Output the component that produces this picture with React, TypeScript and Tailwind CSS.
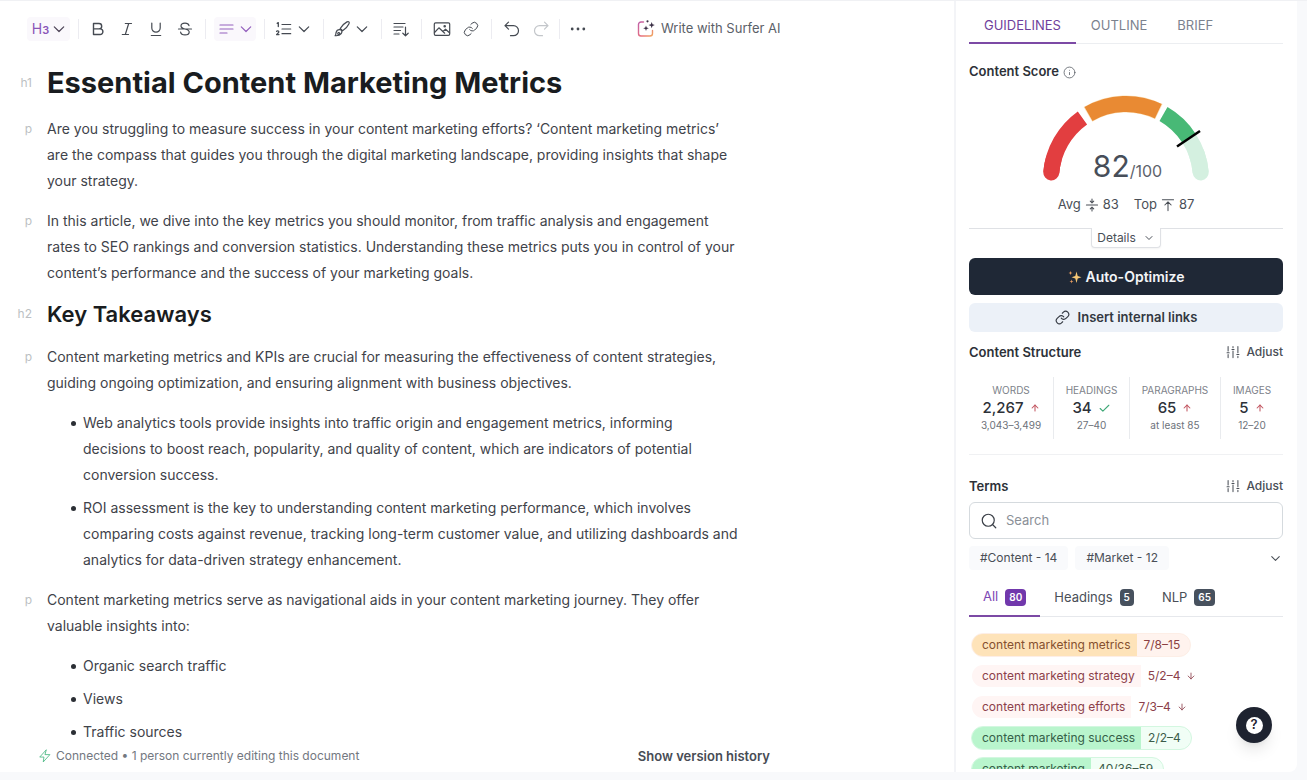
import type { ReactNode } from "react";
import { Link, Search, ChevronDown, Check, ArrowUp, ArrowDown, Info } from "lucide-react";

function Icon({ children, size = 20, w = 1.2, className = "" }: { children: ReactNode; size?: number; w?: number; className?: string }) {
  return (
    <svg
      width={size}
      height={size}
      viewBox="0 0 20 20"
      fill="none"
      stroke="currentColor"
      strokeWidth={w}
      strokeLinecap="round"
      strokeLinejoin="round"
      className={`shrink-0 ${className}`}
      aria-hidden="true"
    >
      {children}
    </svg>
  );
}

function Tool({ label, children, className = "text-[#454a52]" }: { label: string; children: ReactNode; className?: string }) {
  return (
    <button type="button" aria-label={label} className={`flex h-6 w-5 items-center justify-center ${className}`}>
      {children}
    </button>
  );
}

function DropTool({ label, children, className = "text-[#454a52]" }: { label: string; children: ReactNode; className?: string }) {
  return (
    <button type="button" aria-label={label} className={`flex h-6 items-center rounded ${className}`}>
      {children}
      <Icon>
        <path d="m5.300 7.800 4.700 4.700 4.700-4.700" />
      </Icon>
    </button>
  );
}

const Sep = ({ className = "mx-2" }: { className?: string }) => <span className={`h-5 w-px bg-[#ececf1] ${className}`} />;

function Toolbar() {
  return (
    <div role="toolbar" aria-label="Formatting" className="flex h-14 shrink-0 items-center pl-[27px]">
      <DropTool label="Heading 3" className="w-[43px] justify-center bg-[#faf8fc] pl-1 text-[#4c4356]">
        <span className="flex items-baseline text-sm leading-none text-[#8a55b8]">
          H<span className="text-[11px] font-semibold">3</span>
        </span>
      </DropTool>
      <Sep className="mr-[9px] ml-2" />
      <div className="flex gap-[9px]">
        <Tool label="Bold">
          <Icon w={1.4}>
            <path d="M5.500 4.500H11a2.700 2.700 0 0 1 0 5.400H5.500zM5.500 9.900h6.600a2.800 2.800 0 0 1 0 5.600H5.500z" />
          </Icon>
        </Tool>
        <Tool label="Italic">
          <Icon>
            <path d="M8.300 4.500h6.200M5.300 15.500h6.200M11.700 4.500l-3.400 11" />
          </Icon>
        </Tool>
        <Tool label="Underline">
          <Icon>
            <path d="M5.800 4v5a4.200 4.200 0 0 0 8.400 0V4M5.300 16.500h9.400" />
          </Icon>
        </Tool>
        <Tool label="Strikethrough">
          <Icon>
            <path d="M14 6.600c-.4-1.500-1.900-2.400-4-2.400-2.400 0-4 1.100-4 2.900 0 1.600 1.200 2.300 4 2.900 2.900.6 4.200 1.300 4.200 3 0 1.800-1.700 2.900-4.200 2.900-2.400 0-4.100-1-4.400-2.800M3.500 10h13" />
          </Icon>
        </Tool>
      </div>
      <Sep className="mr-2 ml-[10px]" />
      <DropTool label="Align left" className="bg-[#faf8fc] pl-[2px] text-[#9460bd]">
        <Icon>
          <path d="M4 6h13M4 10h13M4 14h7" />
        </Icon>
      </DropTool>
      <Sep className="mr-[9px] ml-2" />
      <DropTool label="Numbered list">
        <Icon>
          <path d="M8 5.500h8.700M8 10h8.700M8 14.700h8.700" />
          <path d="m3.200 4.400 1.100-.8v4M2.600 12.400c.5-.9 2.400-.6 2.200.6 0 .8-1.500 1.600-2.200 2.600h2.400" strokeWidth="1.300" />
        </Icon>
      </DropTool>
      <Sep className="mr-2 ml-[9px]" />
      <DropTool label="Brush">
        <Icon>
          <path d="M8.200 9.500c1.500-2.400 4.700-5.500 6.800-6.600 1.700-.8 2.700.3 2 1.900-1 2.200-4 5.500-6.400 7z" />
          <path d="M8 10.700c1.800.3 2.500 2.300 1.200 3.900-1.300 1.800-3.800 2.300-6.100 2.100 1-.8.6-1.900 1-3.200.5-1.700 2.200-3 3.900-2.800zM6.700 13.600a1 1 0 1 0 .1 0" />
        </Icon>
      </DropTool>
      <Sep className="mx-[9px]" />
      <Tool label="Insert below">
        <Icon>
          <path d="M3 4.500h11M3 8h9M3 11.500h6.500M3 15h5M14.500 8v8.500M11.800 14.200l2.700 2.600 2.700-2.600" />
        </Icon>
      </Tool>
      <Sep className="mx-[10px]" />
      <div className="flex gap-[9px]">
        <Tool label="Image">
          <Icon>
            <rect x="2.300" y="3.800" width="15.400" height="12.600" rx="1.300" />
            <path d="m2.500 13.500 4.400-4.700 5.800 5.400M11 12.500l2.500-2.300 4 3.600" />
            <circle cx="12.700" cy="7.200" r=".7" />
          </Icon>
        </Tool>
        <Tool label="Link">
          <Link size={16} strokeWidth={1.5} />
        </Tool>
      </div>
      <Sep className="mr-[10px] ml-[10px]" />
      <div className="flex gap-[9px]">
        <Tool label="Undo">
          <Icon>
            <path d="M6.500 3.200 3 6.700l3.500 3.500M3 6.700h8.500a5 5 0 0 1 0 10H8.500" />
          </Icon>
        </Tool>
        <Tool label="Redo" className="text-[#c3c6ca]">
          <Icon>
            <path d="M13.500 3.200 17 6.700l-3.500 3.500M17 6.700H8.500a5 5 0 0 0 0 10h3" />
          </Icon>
        </Tool>
      </div>
      <Sep className="mx-2" />
      <Tool label="More">
        <Icon>
          <g fill="currentColor" stroke="none">
            <circle cx="4.200" cy="10" r="1.400" />
            <circle cx="10" cy="10" r="1.400" />
            <circle cx="15.800" cy="10" r="1.400" />
          </g>
        </Icon>
      </Tool>
      <button type="button" className="ml-12 flex items-center gap-[5px] text-[13px] text-[#5b6068]">
        <svg width="20" height="20" viewBox="0 0 20 20" fill="none" aria-hidden="true">
          <defs>
            <linearGradient id="ai" x1="0" y1="0" x2="1" y2="1">
              <stop offset="0" stopColor="#c05fa8" />
              <stop offset=".6" stopColor="#e8707e" />
              <stop offset="1" stopColor="#f0a860" />
            </linearGradient>
          </defs>
          <path d="M7.500 3H5a2.500 2.500 0 0 0-2.500 2.500v9A2.500 2.500 0 0 0 5 17h9a2.500 2.500 0 0 0 2.500-2.500V11.500" stroke="url(#ai)" strokeWidth="1.400" strokeLinecap="round" />
          <g fill="#3a2f45">
            <path d="m10 6.500.7 2.100 2.100.7-2.100.7-.7 2.100-.7-2.100-2.100-.7 2.100-.7z" />
            <path d="m15.700 3 .8 2.300 2.300.8-2.300.8-.8 2.300-.8-2.300-2.300-.8 2.300-.8z" />
            <circle cx="11.500" cy="2.300" r="1.100" />
          </g>
        </svg>
        Write with Surfer AI
      </button>
    </div>
  );
}

function Block({ tag, children, className = "" }: { tag: string; children: ReactNode; className?: string }) {
  return (
    <div className={`flex ${className}`}>
      <span className="w-8 shrink-0 text-right text-[12px]/[inherit] text-[#bcbfc3]">{tag}</span>
      <div className="ml-[15px] min-w-0 flex-1">{children}</div>
    </div>
  );
}

function Bullets({ items, className = "" }: { items: string[]; className?: string }) {
  return (
    <ul className={`ml-[71px] flex flex-col gap-[7px] ${className}`}>
      {items.map((t) => (
        <li key={t} className="flex">
          <span className="mt-[11px] mr-[7px] size-[5px] shrink-0 rounded-full bg-[#2b2f35]" />
          <span>{t}</span>
        </li>
      ))}
    </ul>
  );
}

function Editor() {
  return (
    <article className="min-h-0 max-w-[742px] flex-1 overflow-hidden text-[14px] leading-[26px] text-[#3f434a]">
      <Block tag="h1" className="mt-1 leading-[44px]">
        <h1 className="text-[29px] font-bold text-[#191c20]">Essential Content Marketing Metrics</h1>
      </Block>
      <Block tag="p" className="mt-[11px]">
        <p>
          Are you struggling to measure success in your content marketing efforts? ‘Content marketing metrics’ are the compass that
          guides you through the digital marketing landscape, providing insights that shape your strategy.
        </p>
      </Block>
      <Block tag="p" className="mt-[14px]">
        <p>
          In this article, we dive into the key metrics you should monitor, from traffic analysis and engagement rates to SEO
          rankings and conversion statistics. Understanding these metrics puts you in control of your content’s performance and the
          success of your marketing goals.
        </p>
      </Block>
      <Block tag="h2" className="mt-3 leading-8">
        <h2 className="text-[22px] font-semibold text-[#191c20]">Key Takeaways</h2>
      </Block>
      <Block tag="p" className="mt-[14px]">
        <p>
          Content marketing metrics and KPIs are crucial for measuring the effectiveness of content strategies, guiding ongoing
          optimization, and ensuring alignment with business objectives.
        </p>
      </Block>
      <Bullets
        className="mt-[14px]"
        items={[
          "Web analytics tools provide insights into traffic origin and engagement metrics, informing decisions\u00a0to boost reach, popularity, and quality of content, which are indicators of potential conversion success.",
          "ROI assessment is the key to understanding content marketing performance, which involves comparing costs against revenue, tracking long-term customer value, and utilizing dashboards and analytics for data-driven strategy enhancement.",
        ]}
      />
      <Block tag="p" className="mt-[14px]">
        <p>Content marketing metrics serve as navigational aids in your content marketing journey. They offer valuable insights into:</p>
      </Block>
      <Bullets className="mt-[14px]" items={["Organic search traffic", "Views", "Traffic sources"]} />
    </article>
  );
}

function arc(from: number, to: number) {
  const point = (deg: number) => {
    const a = (deg * Math.PI) / 180;
    return `${83 + 75 * Math.cos(a)} ${84 - 75 * Math.sin(a)}`;
  };
  return `M${point(from)}A75 75 0 0 1 ${point(to)}`;
}

function Gauge() {
  return (
    <div className="relative mx-auto mt-[13px] w-[166px]">
      <svg width="166" height="88" viewBox="0 0 166 88" fill="none" strokeWidth="16" role="img" aria-label="Content score 82 of 100">
        <g strokeLinecap="round">
          <path d={arc(175, 165)} stroke="#e23e40" />
          <path d={arc(20, 5)} stroke="#d4f0e0" />
        </g>
        <path d={arc(175, 125.5)} stroke="#e23e40" />
        <path d={arc(33, 5)} stroke="#d4f0e0" />
        <path d={arc(120.5, 64)} stroke="#fbe3bd" strokeWidth="17" />
        <path d={arc(120, 64.5)} stroke="#e98a33" />
        <path d={arc(60, 33)} stroke="#48b976" />
        <path d="M134 51.500 157 36" stroke="#000" strokeWidth="2.500" />
      </svg>
      <div className="absolute inset-x-0 bottom-0 flex items-baseline justify-center pl-[3px] text-[30px] leading-8 text-[#474e59]">
        82<span className="text-base text-[#5d636c]">/100</span>
      </div>
    </div>
  );
}

const AdjustIcon = () => (
  <Icon size={14} w={1.5}>
    <path d="M3 2v6.500M3 13.500V18M10 2v2M10 8.500V18M17 2v9M17 16v2M1.500 11h3M8.500 6.300h3M15.500 13.500h3" />
  </Icon>
);

function SectionHead({ title, className = "" }: { title: string; className?: string }) {
  return (
    <div className={`flex items-center justify-between text-[13px] leading-5 ${className}`}>
      <h3 className="font-semibold text-[#2d3138]">{title}</h3>
      <button type="button" className="flex items-center gap-[6px] text-[12px] font-medium text-[#4a4f57]">
        <AdjustIcon />
        Adjust
      </button>
    </div>
  );
}

const stats = [
  { label: "WORDS", value: "2,267", range: "3,043–3,499", up: true },
  { label: "HEADINGS", value: "34", range: "27–40", up: false },
  { label: "PARAGRAPHS", value: "65", range: "at least 85", up: true },
  { label: "IMAGES", value: "5", range: "12–20", up: true },
];

function Stats() {
  return (
    <div className="mt-[15px] grid grid-cols-[84fr_76fr_91fr_63fr]">
      {stats.map((s, i) => (
        <div key={s.label} className={`flex h-[62px] flex-col items-center pt-1 whitespace-nowrap ${i ? "border-l border-[#e9ebee]" : ""}`}>
          <span className="text-[10px] leading-[18px] text-[#7d828a]">{s.label}</span>
          <span className="flex items-center gap-[6px] text-[15px] leading-[18px] font-medium text-[#2d3138]">
            {s.value}
            {s.up ? <ArrowUp size={10} strokeWidth={2.5} className="text-[#c25560]" /> : <Check size={13} strokeWidth={2} className="text-[#3fa877]" />}
          </span>
          <span className="text-[10px] leading-4 text-[#6d727a]">{s.range}</span>
        </div>
      ))}
    </div>
  );
}

const Count = ({ children, className }: { children: ReactNode; className: string }) => (
  <span className={`rounded px-1 text-[10px] leading-[17px] font-semibold text-white ${className}`}>{children}</span>
);

const terms = [
  { name: "content marketing metrics", count: "7/8–15", down: false, tone: "bg-[#fff3ee] text-[#8c3f42]", fill: "bg-[#fee3b9] text-[#85502f]", border: "border-[#fdeee6]" },
  { name: "content marketing strategy", count: "5/2–4", down: true, tone: "text-[#8c3f4a]", fill: "bg-[#fff5f4]", border: "border-transparent" },
  { name: "content marketing efforts", count: "7/3–4", down: true, tone: "text-[#8c3f4a]", fill: "bg-[#fff5f4]", border: "border-transparent" },
  { name: "content marketing success", count: "2/2–4", down: false, tone: "bg-[#f1fef6] text-[#3c5c4a]", fill: "bg-[#b9f5cd] text-[#356048]", border: "border-[#d3f7e0]" },
  { name: "content marketing", count: "40/36–59", down: false, tone: "bg-[#f1fef6] text-[#3c5c4a]", fill: "bg-[#b9f5cd] text-[#356048]", border: "border-[#d3f7e0]" },
];

function Sidebar() {
  return (
    <aside className="flex w-[343px] shrink-0 flex-col overflow-hidden rounded-br-lg border-l-2 border-[#f3f4f7] bg-white pr-[14px] pl-[13px] text-[#4a4f57]">
      <nav role="tablist" aria-label="Panels" className="flex h-[43px] shrink-0 border-b border-[#eceef1] text-[13px]">
        <button type="button" role="tab" aria-selected="true" className="-mb-px border-b-2 border-[#7c4aa5] px-[15px] pt-2 text-[#6f3f9c]">
          GUIDELINES
        </button>
        <button type="button" role="tab" className="px-[15px] pt-2 text-[#7b828e]">
          OUTLINE
        </button>
        <button type="button" role="tab" className="px-[15px] pt-2 text-[#7b828e]">
          BRIEF
        </button>
      </nav>
      <h3 className="mt-[18px] flex h-5 shrink-0 items-center gap-1 text-[13px] font-semibold text-[#2d3138]">
        Content Score
        <Info size={13} strokeWidth={1.5} className="text-[#5b6068]" />
      </h3>
      <Gauge />
      <div className="mt-3 flex h-5 shrink-0 items-center justify-center gap-[15px] text-[13px]">
        <span className="flex items-center gap-1">
          Avg
          <Icon size={14} w={1.5}>
            <path d="M2 10h16M10 1.500v5M7.500 4.500 10 7l2.500-2.500M10 18.500v-5M7.500 15.500 10 13l2.500 2.500" />
          </Icon>
          83
        </span>
        <span className="flex items-center gap-1">
          Top
          <Icon size={14} w={1.5}>
            <path d="M2 2.500h16M10 18V6M5.500 10 10 5.500l4.500 4.500" />
          </Icon>
          87
        </span>
      </div>
      <div className="mt-[13px] flex h-5 shrink-0 justify-center border-t border-[#dfe1e5]">
        <button type="button" className="-mt-px flex h-5 items-center gap-[7px] rounded-b border border-t-0 border-[#dfe1e5] bg-white px-[5px] text-[12px] shadow-xs">
          Details
          <ChevronDown size={12} />
        </button>
      </div>
      <button type="button" className="mt-[10px] flex h-[37px] shrink-0 items-center justify-center gap-1 rounded-md bg-[#1f2836] text-sm font-semibold text-[#f3f5f8]">
        <svg width="14" height="14" viewBox="0 0 14 14" aria-hidden="true">
          <path fill="#f6c876" d="M8.500 1.500 9.700 6l3.800 1.200-3.800 1.200-1.200 4.500-1.200-4.500-3.800-1.200L7.300 6z" />
          <path fill="#e59a5f" d="m2.500 1 .6 1.400 1.400.6-1.400.6-.6 1.400L1.900 3.600.5 3l1.400-.6zM3.500 9.500l.5 1.500 1.500.5L4 12l-.5 1.500L3 12l-1.500-.5L3 11z" />
        </svg>
        Auto-Optimize
      </button>
      <button type="button" className="mt-2 flex h-[29px] shrink-0 items-center justify-center gap-2 rounded-md bg-[#ecf1f8] text-[13px] font-semibold text-[#333841]">
        <Link size={15} strokeWidth={1.8} />
        Insert internal links
      </button>
      <SectionHead title="Content Structure" className="mt-[10px] shrink-0" />
      <Stats />
      <SectionHead title="Terms" className="mt-[15px] shrink-0 border-t border-[#f0f1f3] pt-[21px]" />
      <label className="mt-[6px] flex h-[37px] shrink-0 items-center gap-2 rounded-md border border-[#d5dade] px-[10px]">
        <Search size={18} strokeWidth={1.6} className="text-[#3a3f47]" />
        <input type="search" aria-label="Search terms" placeholder="Search" className="min-w-0 flex-1 bg-transparent text-[13px] outline-none placeholder:text-[#8b9097]" />
      </label>
      <div className="mt-[7px] flex h-6 shrink-0 items-center gap-[7px] text-xs">
        <span className="rounded bg-[#f9fafc] px-[11px] leading-6">#Content - 14</span>
        <span className="rounded bg-[#f9fafc] px-[11px] leading-6">#Market - 12</span>
        <button type="button" aria-label="Show more topics" className="ml-auto">
          <ChevronDown size={15} strokeWidth={1.7} />
        </button>
      </div>
      <div role="tablist" aria-label="Terms filter" className="mt-[9px] flex h-[38px] shrink-0 border-b border-[#e6e8ec] text-[13px]">
        <button type="button" role="tab" aria-selected="true" className="-mb-px flex items-center gap-[7px] border-b-2 border-[#7c4aa5] px-[14px] text-[#7d46b4]">
          All <Count className="bg-[#7138ac]">80</Count>
        </button>
        <button type="button" role="tab" className="flex items-center gap-[7px] px-[14px]">
          Headings <Count className="bg-[#47515e]">5</Count>
        </button>
        <button type="button" role="tab" className="flex items-center gap-[7px] px-[14px]">
          NLP <Count className="bg-[#47515e]">65</Count>
        </button>
      </div>
      <ul className="mt-4 mb-[3px] ml-[2px] flex min-h-0 flex-1 flex-col items-start gap-[7px] overflow-hidden text-[12px]">
        {terms.map((t) => (
          <li key={t.name} className={`flex h-6 shrink-0 items-center overflow-hidden rounded-full border leading-6 ${t.tone} ${t.border}`}>
            <span className={`pr-[6px] pl-[10px] ${t.fill}`}>{t.name}</span>
            <span className="flex items-center gap-[6px] pr-[10px] pl-[7px]">
              {t.count}
              {t.down && <ArrowDown size={10} strokeWidth={2} />}
            </span>
          </li>
        ))}
      </ul>
    </aside>
  );
}

export default function App() {
  return (
    <div className="relative flex h-screen overflow-hidden border-t border-[#f0f1f4] bg-[#f8f9fb] pr-[10px] pb-2 font-['Inter',sans-serif]">
      <main className="flex min-w-0 flex-1 flex-col bg-white">
        <Toolbar />
        <Editor />
        <footer className="flex h-[26px] shrink-0 items-center pb-[6px] pl-[38px] text-xs text-[#73787f]">
          <div className="flex w-full max-w-[732px] items-center">
            <Icon size={14} className="text-[#49b882]">
              <path d="M11.500 1.500 2.500 11.500h6l-1 7 9.500-10.500h-6.500z" />
            </Icon>
            <span className="ml-1">Connected • 1 person currently editing this document</span>
            <button type="button" className="ml-auto text-[13px] leading-4 font-semibold text-[#474c54]">
              Show version history
            </button>
          </div>
        </footer>
      </main>
      <Sidebar />
      <button type="button" aria-label="Help" className="absolute right-[35px] bottom-[37px] flex size-9 items-center justify-center rounded-full bg-[#1e2330] shadow-lg">
        <span className="flex size-[17px] items-center justify-center rounded-full bg-white text-[13px] font-semibold text-[#1e2330]">?</span>
      </button>
    </div>
  );
}
